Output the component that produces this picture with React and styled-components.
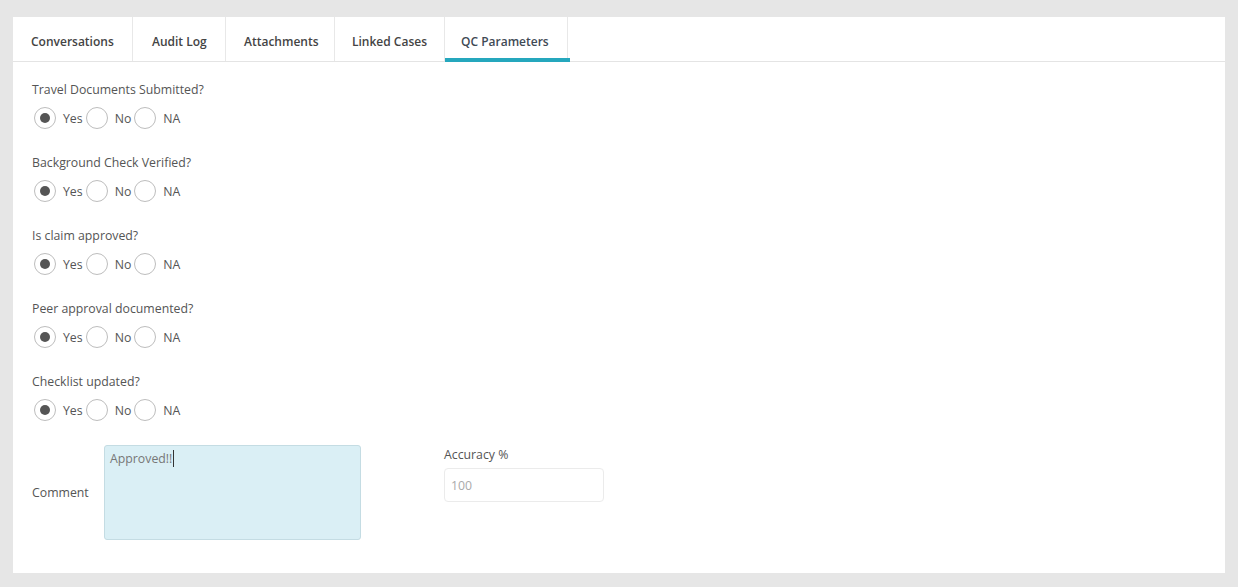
import React from "react";
import styled, { createGlobalStyle } from "styled-components";

const Global = createGlobalStyle`
  html, body { margin: 0; padding: 0; }
  body {
    background: #e6e6e6;
    font-family: "Open Sans", "Noto Sans", sans-serif;
    font-size: 12.3px;
    color: #555;
  }
`;

const Page = styled.div`
  padding: 17px 13px 14px 13px;
`;

const Panel = styled.div`
  background: #fff;
  height: 556px;
  box-sizing: border-box;
`;

const TabBar = styled.div`
  display: flex;
  height: 45px;
  border-bottom: 1px solid #e4e4e4;
  box-sizing: border-box;
`;

const Tab = styled.div`
  position: relative;
  display: flex;
  align-items: center;
  box-sizing: border-box;
  width: ${(p) => p.$w}px;
  padding: 4px 0 0 ${(p) => p.$pl}px;
  border-right: 1px solid #e8e8e8;
  font-weight: 600;
  font-size: 12px;
  color: ${(p) => (p.$active ? "#3f4a55" : "#444")};
  ${(p) =>
    p.$active &&
    `&::after {
      content: "";
      position: absolute;
      left: 0;
      right: -3px;
      bottom: -1px;
      height: 4px;
      background: #25a7bd;
    }`}
`;

const Content = styled.div`
  padding: 18px 19px 0 19px;
`;

const Group = styled.div`
  margin-bottom: 23px;
`;

const Question = styled.div`
  line-height: 20px;
  margin-bottom: 6px;
`;

const RadioRow = styled.div`
  display: flex;
  align-items: center;
  height: 24px;
  padding-left: 2px;
`;

const RadioOption = styled.label`
  display: flex;
  align-items: center;
  margin-right: 3px;
  cursor: pointer;
`;

const Circle = styled.span`
  width: 20px;
  height: 20px;
  border-radius: 50%;
  border: 1px solid #bdbdbd;
  display: flex;
  align-items: center;
  justify-content: center;
  margin-right: 7px;
  box-sizing: content-box;
  &::after {
    content: "";
    width: 10px;
    height: 10px;
    border-radius: 50%;
    background: ${(p) => (p.$checked ? "#555" : "transparent")};
  }
`;

const BottomRow = styled.div`
  display: flex;
  align-items: flex-start;
`;

const CommentField = styled.div`
  display: flex;
  align-items: center;
`;

const CommentLabel = styled.div`
  width: 72px;
`;

const TextAreaWrap = styled.div`
  position: relative;
`;

const TextArea = styled.textarea`
  display: block;
  width: 257px;
  height: 95px;
  box-sizing: border-box;
  background: #daeff5;
  border: 1px solid #c4dce3;
  border-radius: 3px;
  padding: 4px 5px;
  font-family: "Open Sans", "Noto Sans", sans-serif;
  font-size: 12.3px;
  color: #777;
  resize: none;
  outline: none;
`;

const Caret = styled.span`
  position: absolute;
  left: 69px;
  top: 5px;
  width: 1px;
  height: 17px;
  background: #333;
`;

const AccuracyField = styled.div`
  margin-left: 83px;
  margin-top: 1px;
  display: flex;
  flex-direction: column;
`;

const AccuracyLabel = styled.div`
  line-height: 18px;
  margin-bottom: 4px;
`;

const Input = styled.input`
  width: 160px;
  height: 34px;
  box-sizing: border-box;
  border: 1px solid #ebebeb;
  border-radius: 4px;
  padding: 0 6px;
  font-family: "Open Sans", "Noto Sans", sans-serif;
  font-size: 12.3px;
  color: #555;
  outline: none;
  &::placeholder { color: #aaa; }
`;

const tabs = [
  { label: "Conversations", w: 120, pl: 18 },
  { label: "Audit Log", w: 93, pl: 19 },
  { label: "Attachments", w: 109, pl: 18 },
  { label: "Linked Cases", w: 110, pl: 17 },
  { label: "QC Parameters", w: 123, pl: 16, active: true },
];

const questions = [
  "Travel Documents Submitted?",
  "Background Check Verified?",
  "Is claim approved?",
  "Peer approval documented?",
  "Checklist updated?",
];

export default function App() {
  return (
    <>
      <Global />
      <Page>
        <Panel>
          <TabBar>
            {tabs.map((t) => (
              <Tab key={t.label} $active={t.active} $w={t.w} $pl={t.pl}>
                {t.label}
              </Tab>
            ))}
          </TabBar>
          <Content>
            {questions.map((q) => (
              <Group key={q}>
                <Question>{q}</Question>
                <RadioRow>
                  {["Yes", "No", "NA"].map((o) => (
                    <RadioOption key={o}>
                      <Circle $checked={o === "Yes"} />
                      {o}
                    </RadioOption>
                  ))}
                </RadioRow>
              </Group>
            ))}
            <BottomRow>
              <CommentField>
                <CommentLabel>Comment</CommentLabel>
                <TextAreaWrap>
                  <TextArea defaultValue="Approved!!" />
                  <Caret />
                </TextAreaWrap>
              </CommentField>
              <AccuracyField>
                <AccuracyLabel>Accuracy %</AccuracyLabel>
                <Input placeholder="100" />
              </AccuracyField>
            </BottomRow>
          </Content>
        </Panel>
      </Page>
    </>
  );
}
